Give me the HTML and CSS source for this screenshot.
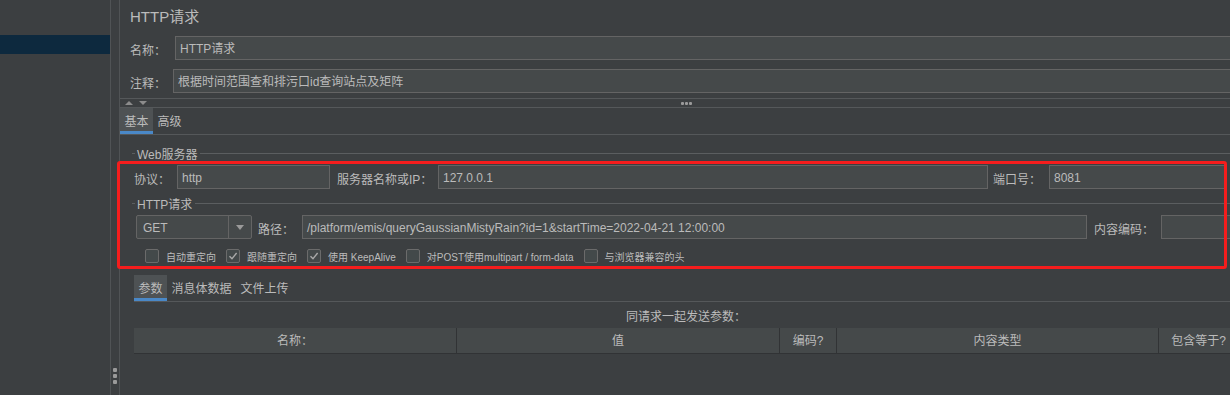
FILE: index.html
```html
<!DOCTYPE html>
<html lang="zh-CN">

<head>
    <meta charset="UTF-8">
    <meta name="viewport" content="width=device-width, initial-scale=1.0">
    <title>HTTP请求</title>
    <link rel="stylesheet" href="styles.css">
</head>

<body>
    <div class="app">
        <div class="tree">
            <div class="tree-row selected"></div>
        </div>

        <div class="vsplit">
            <div class="grip-v"><i></i><i></i><i></i></div>
        </div>

        <div class="main">
            <div class="title">HTTP请求</div>

            <div class="field name-row">
                <label>名称：</label>
                <div class="input">HTTP请求</div>
            </div>
            <div class="field comment-row">
                <label>注释：</label>
                <div class="input">根据时间范围查和排污口id查询站点及矩阵</div>
            </div>

            <div class="hsplit">
                <div class="arrows"><span class="up"></span><span class="down"></span></div>
                <div class="grip-h"><i></i><i></i><i></i></div>
                <div></div>
            </div>

            <div class="tabs top-tabs">
                <span class="tab active">基本</span>
                <span class="tab">高级</span>
            </div>

            <div class="group web">
                <div class="group-title"><span>Web服务器</span></div>
                <div class="row web-row">
                    <label class="l-proto">协议：</label>
                    <div class="input w-proto">http</div>
                    <label class="l-host">服务器名称或IP：</label>
                    <div class="input w-host">127.0.0.1</div>
                    <label class="l-port">端口号：</label>
                    <div class="input w-port">8081</div>
                </div>
            </div>

            <div class="group http">
                <div class="group-title"><span>HTTP请求</span></div>
                <div class="row http-row">
                    <div class="combo">
                        <span class="combo-text">GET</span>
                        <span class="combo-btn"><span class="caret"></span></span>
                    </div>
                    <label class="l-path">路径：</label>
                    <div class="input w-path">/platform/emis/queryGaussianMistyRain?id=1&amp;startTime=2022-04-21 12:00:00</div>
                    <label class="l-enc">内容编码：</label>
                    <div class="input w-enc"></div>
                </div>
            </div>

            <div class="checks">
                <div class="check"><span class="box"></span>自动重定向</div>
                <div class="check"><span class="box"><svg viewBox="0 0 12 12"><path d="M2.5 6.2 L5 8.8 L9.6 3"/></svg></span>跟随重定向</div>
                <div class="check"><span class="box"><svg viewBox="0 0 12 12"><path d="M2.5 6.2 L5 8.8 L9.6 3"/></svg></span>使用 KeepAlive</div>
                <div class="check"><span class="box"></span>对POST使用multipart / form-data</div>
                <div class="check"><span class="box"></span>与浏览器兼容的头</div>
            </div>

            <div class="tabs sub-tabs">
                <span class="tab active">参数</span>
                <span class="tab">消息体数据</span>
                <span class="tab">文件上传</span>
            </div>

            <div class="caption">同请求一起发送参数：</div>

            <div class="grid-head">
                <div class="col c-name">名称：</div>
                <div class="col c-value">值</div>
                <div class="col c-enc">编码?</div>
                <div class="col c-type">内容类型</div>
                <div class="col c-eq">包含等于?</div>
            </div>
        </div>
    </div>

    <div class="mark"></div>
</body>

</html>
```

FILE: styles.css
```css
* {
    box-sizing: border-box;
}

html,
body {
    margin: 0;
    padding: 0;
}

body {
    width: 1230px;
    height: 395px;
    overflow: hidden;
    position: relative;
    background-color: #3c3f41;
    color: #bbbbbb;
    font-family: "Liberation Sans", "Noto Sans CJK SC", sans-serif;
    font-size: 12px;
}

.app {
    display: flex;
    height: 395px;
}

/* left tree */
.tree {
    width: 110px;
    flex: none;
    padding-top: 35px;
}

.tree-row.selected {
    height: 19px;
    background-color: #0d293e;
}

.vsplit {
    width: 10px;
    flex: none;
    border-left: 1px solid #505355;
    border-right: 1px solid #505355;
    display: flex;
    flex-direction: column;
    justify-content: flex-end;
    align-items: center;
    padding-bottom: 11px;
}

.grip-v {
    display: flex;
    flex-direction: column;
    gap: 2px;
}

.grip-v i,
.grip-h i {
    display: block;
    width: 4px;
    height: 4px;
    border-radius: 1px;
    background-color: #9a9a9a;
}

/* main panel */
.main {
    flex: none;
    width: 1132px;
}

.title {
    height: 36px;
    line-height: 34px;
    padding-left: 10px;
    font-size: 15px;
}

.field {
    display: flex;
    align-items: center;
    height: 24px;
    padding-left: 10px;
}

.name-row label {
    width: 45px;
}

.comment-row {
    margin-top: 9px;
}

.comment-row label {
    width: 43px;
}

.input {
    height: 24px;
    line-height: 20px;
    padding: 2px 4px 0;
    border: 1px solid #646464;
    background-color: #45494a;
    white-space: nowrap;
    overflow: hidden;
    flex: none;
}

.field .input {
    flex: 1;
}

label {
    flex: none;
    white-space: nowrap;
    padding-top: 3px;
}

.hsplit {
    margin-top: 5px;
    height: 10px;
    border-top: 1px solid #55585a;
    border-bottom: 1px solid #55585a;
    display: grid;
    grid-template-columns: 1fr auto 1fr;
    align-items: center;
}

.arrows {
    display: flex;
    gap: 6px;
    padding-left: 5px;
}

.arrows span {
    width: 0;
    height: 0;
    border-left: 4px solid transparent;
    border-right: 4px solid transparent;
}

.arrows .up {
    border-bottom: 4px solid #8c8c8c;
}

.arrows .down {
    border-top: 4px solid #8c8c8c;
}

.grip-h {
    display: flex;
}

.grip-h i {
    width: 3px;
    height: 3px;
    margin: 0 0.5px;
}

/* tabs */
.tabs {
    display: flex;
    border-bottom: 1px solid #55585a;
}

.tab {
    height: 26px;
    line-height: 18px;
    padding: 5px 4.5px 0;
    border-bottom: 3px solid transparent;
}

.tab.active {
    background-color: #4e5254;
    border-bottom-color: #4a88c7;
}

.sub-tabs {
    margin: 12px 14px 0;
}

/* titled groups */
.group-title {
    display: flex;
    align-items: center;
    height: 16px;
    margin-left: 12px;
}

.group-title::before,
.group-title::after {
    content: "";
    height: 1px;
    background-color: #5b5e60;
}

.group-title::before {
    width: 3px;
}

.group-title::after {
    flex: 1;
}

.group-title span {
    padding: 0 3px 0 2px;
}

.web .group-title {
    margin-top: 10px;
}

.http .group-title {
    margin-top: 6px;
}

.row {
    display: flex;
    align-items: center;
    height: 24px;
    margin-top: 4px;
}

.web-row {
    padding-left: 14px;
}

.l-proto { width: 43px; }
.w-proto { width: 153px; }
.l-host { width: 101px; margin-left: 7px; }
.w-host { width: 550px; }
.l-port { width: 56px; margin-left: 5px; }
.w-port { width: 178px; }

.http-row {
    padding-left: 16px;
}

.combo {
    display: flex;
    width: 116px;
    height: 24px;
    border: 1px solid #646464;
    border-radius: 2px;
    background-color: #45494a;
    flex: none;
}

.combo-text {
    flex: 1;
    line-height: 20px;
    padding: 2px 0 0 6px;
}

.combo-btn {
    width: 23px;
    border-left: 1px solid #646464;
    display: flex;
    align-items: center;
    justify-content: center;
}

.caret {
    width: 0;
    height: 0;
    border-left: 4px solid transparent;
    border-right: 4px solid transparent;
    border-top: 5px solid #9a9a9a;
}

.l-path { width: 44px; margin-left: 6px; }
.w-path { width: 785px; }
.l-enc { width: 67px; margin-left: 7px; }
.w-enc { flex: 1; }

/* checkboxes */
.checks {
    display: flex;
    align-items: center;
    gap: 10px;
    height: 14px;
    margin-top: 10px;
    padding-left: 25px;
}

.check {
    display: flex;
    align-items: center;
    gap: 7px;
    font-size: 10px;
    white-space: nowrap;
}

.box {
    width: 14px;
    height: 14px;
    border: 1px solid #6b6b6b;
    border-radius: 2px;
    background-color: #43494a;
    display: flex;
}

.box svg {
    width: 12px;
    height: 12px;
    fill: none;
    stroke: #a9a9a9;
    stroke-width: 1.4;
}

/* params table */
.caption {
    height: 26px;
    padding-top: 4px;
    line-height: 22px;
    text-align: center;
}

.grid-head {
    display: flex;
    height: 26px;
    margin: 0 14px;
    background-color: #45494a;
    border-bottom: 1px solid #313335;
}

.col {
    line-height: 23px;
    padding-top: 2px;
    text-align: center;
    border-right: 1px solid #313335;
    white-space: nowrap;
    flex: none;
}

.c-name { width: 323px; }
.c-value { width: 323px; }
.c-enc { width: 57px; }
.c-type { width: 322px; }
.c-eq { flex: 1; border-right: none; }

/* red annotation frame over the request block */
.mark {
    position: absolute;
    left: 117px;
    top: 161px;
    width: 1110px;
    height: 108px;
    border: 3px solid #f51d1d;
    border-radius: 3px;
}
```
